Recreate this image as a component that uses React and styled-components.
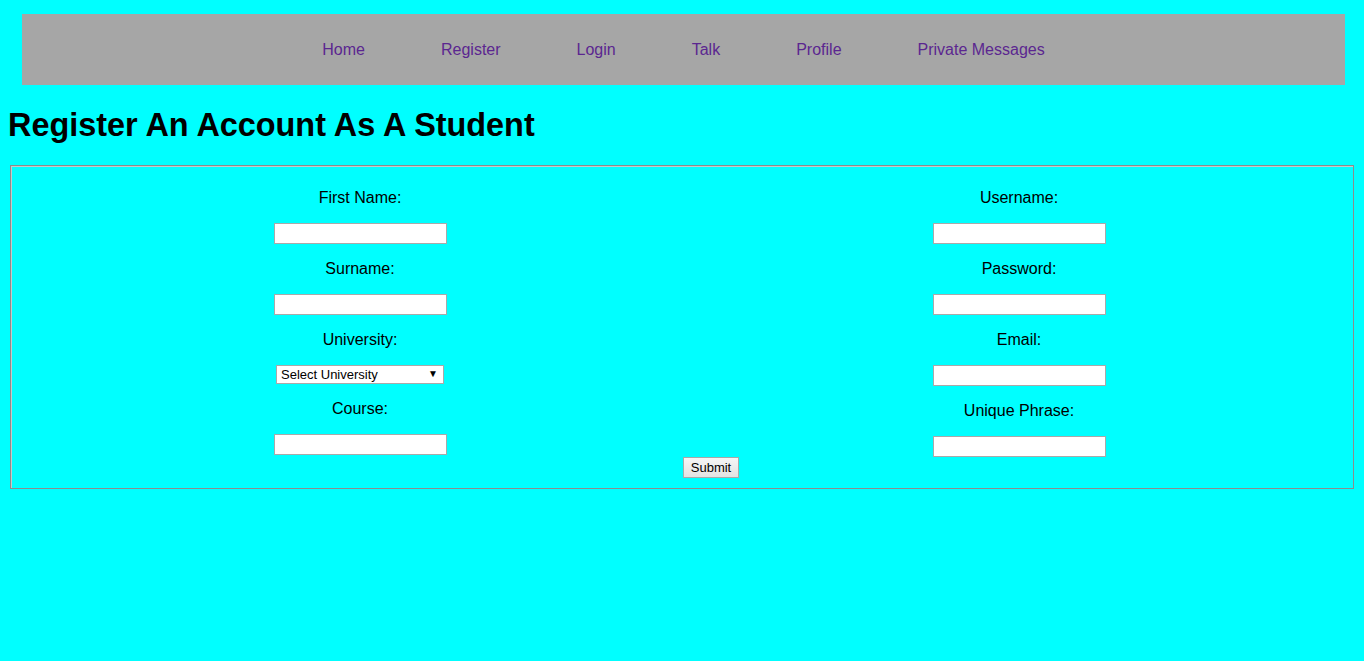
import React from 'react'
import styled, { createGlobalStyle } from 'styled-components'

const GlobalStyle = createGlobalStyle`
  html, body {
    background: #00ffff;
  }
  body {
    margin: 8px;
    font-family: "Liberation Sans", Arial, sans-serif;
    color: #000;
  }
`

const Nav = styled.nav`
  margin: 6px 11px 0 14px;
  height: 71px;
  background: #a6a6a6;
  display: flex;
  justify-content: center;
  align-items: center;
  gap: 76px;
`

const NavLink = styled.a`
  font-size: 16px;
  color: #5b2690;
  text-decoration: none;
  padding-top: 1px;
`

const Title = styled.h1`
  margin: 22px 0 21px;
  font-size: 32.4px;
  font-weight: bold;
  line-height: 37px;
`

const Fieldset = styled.fieldset`
  margin: 0 2px;
  padding: 7px 12px 10px;
  border: 1px solid #8c8c8c;
  box-shadow: inset 1px 1px 0 #c8c8c8;
`

const Columns = styled.div`
  display: grid;
  grid-template-columns: 674px 1fr;
  align-items: start;
`

const Column = styled.div`
  display: flex;
  flex-direction: column;
  align-items: center;
`

const Label = styled.p`
  margin: 16px 0;
  font-size: 16px;
  line-height: 18px;
`

const TextInput = styled.input`
  box-sizing: border-box;
  width: 173px;
  height: 21px;
  margin: 0;
  padding: 1px 2px;
  border: 1px solid #a9a9a9;
  background: #fff;
  font-size: 13px;
`

const SelectWrap = styled.div`
  position: relative;
  width: 168px;
  height: 19px;
`

const Select = styled.select`
  appearance: none;
  box-sizing: border-box;
  width: 100%;
  height: 100%;
  margin: 0;
  padding: 0 0 0 4px;
  border: 1px solid #a9a9a9;
  border-radius: 0;
  background: #fff;
  font-family: "Liberation Sans", Arial, sans-serif;
  font-size: 13px;
  color: #000;
`

const Arrow = styled.span`
  position: absolute;
  right: 6px;
  top: 4px;
  font-size: 10px;
  line-height: 10px;
  pointer-events: none;
`

const SubmitRow = styled.div`
  display: flex;
  justify-content: center;
  padding-left: 58px;
`

const SubmitButton = styled.button`
  box-sizing: border-box;
  height: 21px;
  padding: 0 7px;
  border: 1px solid #a9a9a9;
  border-radius: 0;
  background: linear-gradient(#f6f6f6, #e2e2e2);
  font-family: "Liberation Sans", Arial, sans-serif;
  font-size: 13px;
  color: #000;
`

const links = ['Home', 'Register', 'Login', 'Talk', 'Profile', 'Private Messages']

function Field({ label, type = 'text' }) {
  return (
    <>
      <Label>{label}</Label>
      <TextInput type={type} />
    </>
  )
}

export default function App() {
  return (
    <>
      <GlobalStyle />
      <Nav>
        {links.map(l => (
          <NavLink key={l} href="#">{l}</NavLink>
        ))}
      </Nav>
      <Title>Register An Account As A Student</Title>
      <Fieldset>
        <Columns>
          <Column>
            <Field label="First Name:" />
            <Field label="Surname:" />
            <Label>University:</Label>
            <SelectWrap>
              <Select defaultValue="">
                <option value="">Select University</option>
              </Select>
              <Arrow>▼</Arrow>
            </SelectWrap>
            <Field label="Course:" />
          </Column>
          <Column>
            <Field label="Username:" />
            <Field label="Password:" type="password" />
            <Field label="Email:" />
            <Field label="Unique Phrase:" />
          </Column>
        </Columns>
        <SubmitRow>
          <SubmitButton type="submit">Submit</SubmitButton>
        </SubmitRow>
      </Fieldset>
    </>
  )
}
